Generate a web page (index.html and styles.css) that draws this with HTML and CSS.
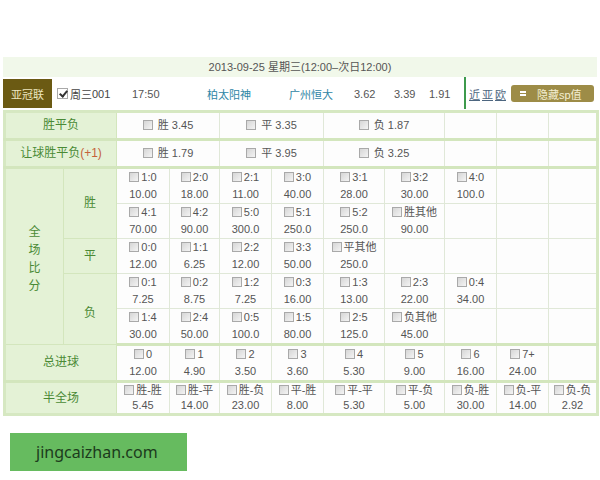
FILE: index.html
```html
<!DOCTYPE html>
<html lang="zh">
<head>
<meta charset="utf-8">
<title>竞彩</title>
<link rel="stylesheet" href="styles.css">
</head>
<body>
<div class="page">
  <div class="datebar">2013-09-25 星期三(12:00–次日12:00)</div>
  <div class="match">
    <div class="league">亚冠联</div>
    <div class="num"><span class="cb checked"></span>周三<span class="numd">001</span></div>
    <div class="time">17:50</div>
    <div class="team home">柏太阳神</div>
    <div class="team away">广州恒大</div>
    <div class="odd o1">3.62</div>
    <div class="odd o2">3.39</div>
    <div class="odd o3">1.91</div>
    <div class="sep"></div>
    <div class="links"><span class="lk">近</span><span class="lk">亚</span><span class="lk">欧</span></div>
    <div class="btn"><span class="minus"></span>隐藏sp值</div>
  </div>
  <table class="odds">
    <colgroup>
      <col class="c-l1"><col class="c-l2">
      <col class="c53"><col class="c50"><col class="c52"><col class="c52">
      <col class="c61"><col class="c60"><col class="c52"><col class="c52"><col class="c49">
    </colgroup>
    <tr class="r-spf sec">
      <td class="lab" colspan="2">胜平负</td>
      <td class="one" colspan="2"><span class="cb"></span> 胜 3.45</td>
      <td class="one" colspan="2"><span class="cb"></span> 平 3.35</td>
      <td class="one" colspan="2"><span class="cb"></span> 负 1.87</td>
      <td></td><td></td><td></td>
    </tr>
    <tr class="r-spf sec">
      <td class="lab" colspan="2">让球胜平负<span class="hc">(+1)</span></td>
      <td class="one" colspan="2"><span class="cb"></span> 胜 1.79</td>
      <td class="one" colspan="2"><span class="cb"></span> 平 3.95</td>
      <td class="one" colspan="2"><span class="cb"></span> 负 3.25</td>
      <td></td><td></td><td></td>
    </tr>
    <tr class="r-sc">
      <td class="lab vert" rowspan="5">全<br>场<br>比<br>分</td>
      <td class="lab" rowspan="2">胜</td>
      <td><span class="cb"></span>1:0<br>10.00</td>
      <td><span class="cb"></span>2:0<br>18.00</td>
      <td><span class="cb"></span>2:1<br>11.00</td>
      <td><span class="cb"></span>3:0<br>40.00</td>
      <td><span class="cb"></span>3:1<br>28.00</td>
      <td><span class="cb"></span>3:2<br>30.00</td>
      <td><span class="cb"></span>4:0<br>100.0</td>
      <td></td><td></td>
    </tr>
    <tr class="r-sc">
      <td><span class="cb"></span>4:1<br>70.00</td>
      <td><span class="cb"></span>4:2<br>90.00</td>
      <td><span class="cb"></span>5:0<br>300.0</td>
      <td><span class="cb"></span>5:1<br>250.0</td>
      <td><span class="cb"></span>5:2<br>250.0</td>
      <td><span class="cb"></span>胜其他<br>90.00</td>
      <td></td><td></td><td></td>
    </tr>
    <tr class="r-sc">
      <td class="lab">平</td>
      <td><span class="cb"></span>0:0<br>12.00</td>
      <td><span class="cb"></span>1:1<br>6.25</td>
      <td><span class="cb"></span>2:2<br>12.00</td>
      <td><span class="cb"></span>3:3<br>50.00</td>
      <td><span class="cb"></span>平其他<br>250.0</td>
      <td></td><td></td><td></td><td></td>
    </tr>
    <tr class="r-sc">
      <td class="lab lab-f" rowspan="2">负</td>
      <td><span class="cb"></span>0:1<br>7.25</td>
      <td><span class="cb"></span>0:2<br>8.75</td>
      <td><span class="cb"></span>1:2<br>7.25</td>
      <td><span class="cb"></span>0:3<br>16.00</td>
      <td><span class="cb"></span>1:3<br>13.00</td>
      <td><span class="cb"></span>2:3<br>22.00</td>
      <td><span class="cb"></span>0:4<br>34.00</td>
      <td></td><td></td>
    </tr>
    <tr class="r-sc sec">
      <td><span class="cb"></span>1:4<br>30.00</td>
      <td><span class="cb"></span>2:4<br>50.00</td>
      <td><span class="cb"></span>0:5<br>100.0</td>
      <td><span class="cb"></span>1:5<br>80.00</td>
      <td><span class="cb"></span>2:5<br>125.0</td>
      <td><span class="cb"></span>负其他<br>45.00</td>
      <td></td><td></td><td></td>
    </tr>
    <tr class="r-tg sec">
      <td class="lab" colspan="2">总进球</td>
      <td><span class="cb"></span>0<br>12.00</td>
      <td><span class="cb"></span>1<br>4.90</td>
      <td><span class="cb"></span>2<br>3.50</td>
      <td><span class="cb"></span>3<br>3.60</td>
      <td><span class="cb"></span>4<br>5.30</td>
      <td><span class="cb"></span>5<br>9.00</td>
      <td><span class="cb"></span>6<br>16.00</td>
      <td><span class="cb"></span>7+<br>24.00</td>
      <td></td>
    </tr>
    <tr class="r-hf">
      <td class="lab" colspan="2">半全场</td>
      <td><span class="cb"></span>胜-胜<br>5.45</td>
      <td><span class="cb"></span>胜-平<br>14.00</td>
      <td><span class="cb"></span>胜-负<br>23.00</td>
      <td><span class="cb"></span>平-胜<br>8.00</td>
      <td><span class="cb"></span>平-平<br>5.30</td>
      <td><span class="cb"></span>平-负<br>5.00</td>
      <td><span class="cb"></span>负-胜<br>30.00</td>
      <td><span class="cb"></span>负-平<br>14.00</td>
      <td><span class="cb"></span>负-负<br>2.92</td>
    </tr>
  </table>
  <div class="brand">jingcaizhan.com</div>
</div>
</body>
</html>
```

FILE: styles.css
```css
* { box-sizing: border-box; }
html, body { margin: 0; padding: 0; background: #fff; }
body {
  font-family: "Liberation Sans", "Noto Sans CJK SC", sans-serif;
  font-size: 11px;
  color: #555;
}
.page { padding: 57px 3px 0 3px; width: 600px; }

.datebar {
  height: 20px;
  line-height: 20px;
  background: #f1f8ea;
  text-align: center;
  color: #555;
  font-size: 11px;
}

.match { display: flex; align-items: center; height: 33px; }
.league {
  width: 49px; height: 29px;
  background: #6b5a13;
  color: #ede7c0;
  font-size: 11px;
  display: flex; align-items: center; justify-content: center;
}
.num { width: 75px; margin-left: 5px; display: flex; align-items: center; font-size: 11px; color: #444; }
.numd { font-size: 11px; }
.time { width: 75px; font-size: 11px; }
.team { color: #2f86a6; font-size: 11px; }
.home { width: 82px; }
.away { width: 65px; }
.o1 { width: 40px; }
.o2 { width: 35px; }
.o3 { width: 35px; }
.sep { width: 2px; height: 32px; background: #3d9a4c; align-self: flex-start; }
.links { width: 45px; padding-left: 3px; font-size: 11px; color: #4d6680; display: flex; gap: 2px; }
.lk { text-decoration: underline; }
.btn {
  width: 83px; height: 17px;
  background: #9d8c47;
  border-radius: 3px;
  color: #f4efd2;
  font-size: 11px;
  display: flex; align-items: center;
  padding-left: 9px;
}
.minus {
  width: 6px; height: 5px;
  border-top: 2px solid #fff;
  border-bottom: 2px solid #fff;
  margin-right: 11px;
}

.cb {
  display: inline-block;
  width: 10px; height: 10px;
  border: 1px solid #a9a9a9;
  background: linear-gradient(135deg, #d6d6d6, #f4f4f4);
  vertical-align: -1px;
  margin-right: 2px;
}
.cb.checked {
  background: #fff;
  position: relative;
  width: 11px; height: 11px;
  margin-right: 2px;
}
.cb.checked::after {
  content: "";
  position: absolute;
  left: 3px; top: 0px;
  width: 3px; height: 6px;
  border: solid #333;
  border-width: 0 2px 2px 0;
  transform: rotate(40deg);
}

.odds {
  width: 594px;
  border-collapse: collapse;
  table-layout: fixed;
  border: 3px solid #d6e8c2;
}
.c-l1 { width: 59px; }
.c-l2 { width: 53px; }
.c53 { width: 53px; }
.c50 { width: 50px; }
.c52 { width: 52px; }
.c61 { width: 61px; }
.c60 { width: 60px; }
.c49 { width: 49px; }

.odds td {
  border: 1px solid #e0e8d8;
  background: #fdfdfd;
  text-align: center;
  padding: 0;
  line-height: 17px;
  color: #555;
}
.odds tr.sec td { border-bottom: 3px solid #d3e6bd; }
.odds td.lab {
  background: #e4f2d6;
  color: #4a8a35;
  font-size: 12px;
  border-color: #d3e6bd;
}
.odds td.vert { line-height: 18px; padding-top: 4px; }
.odds td.lab-f { padding-top: 8px; }
.hc { color: #c4623a; }

.r-spf { height: 28px; }
.r-spf td.one { font-size: 11px; }
.r-sc { height: 35px; }
.r-tg { height: 36px; }
.r-hf { height: 31px; }
.r-hf td { line-height: 15px; }

.brand {
  margin-top: 17px;
  margin-left: 7px;
  width: 177px;
  height: 38px;
  background: #66bb5f;
  color: #1c3a1c;
  font-family: "Noto Sans", sans-serif;
  font-size: 16px;
  line-height: 38px;
  padding-left: 26px;
}
```
